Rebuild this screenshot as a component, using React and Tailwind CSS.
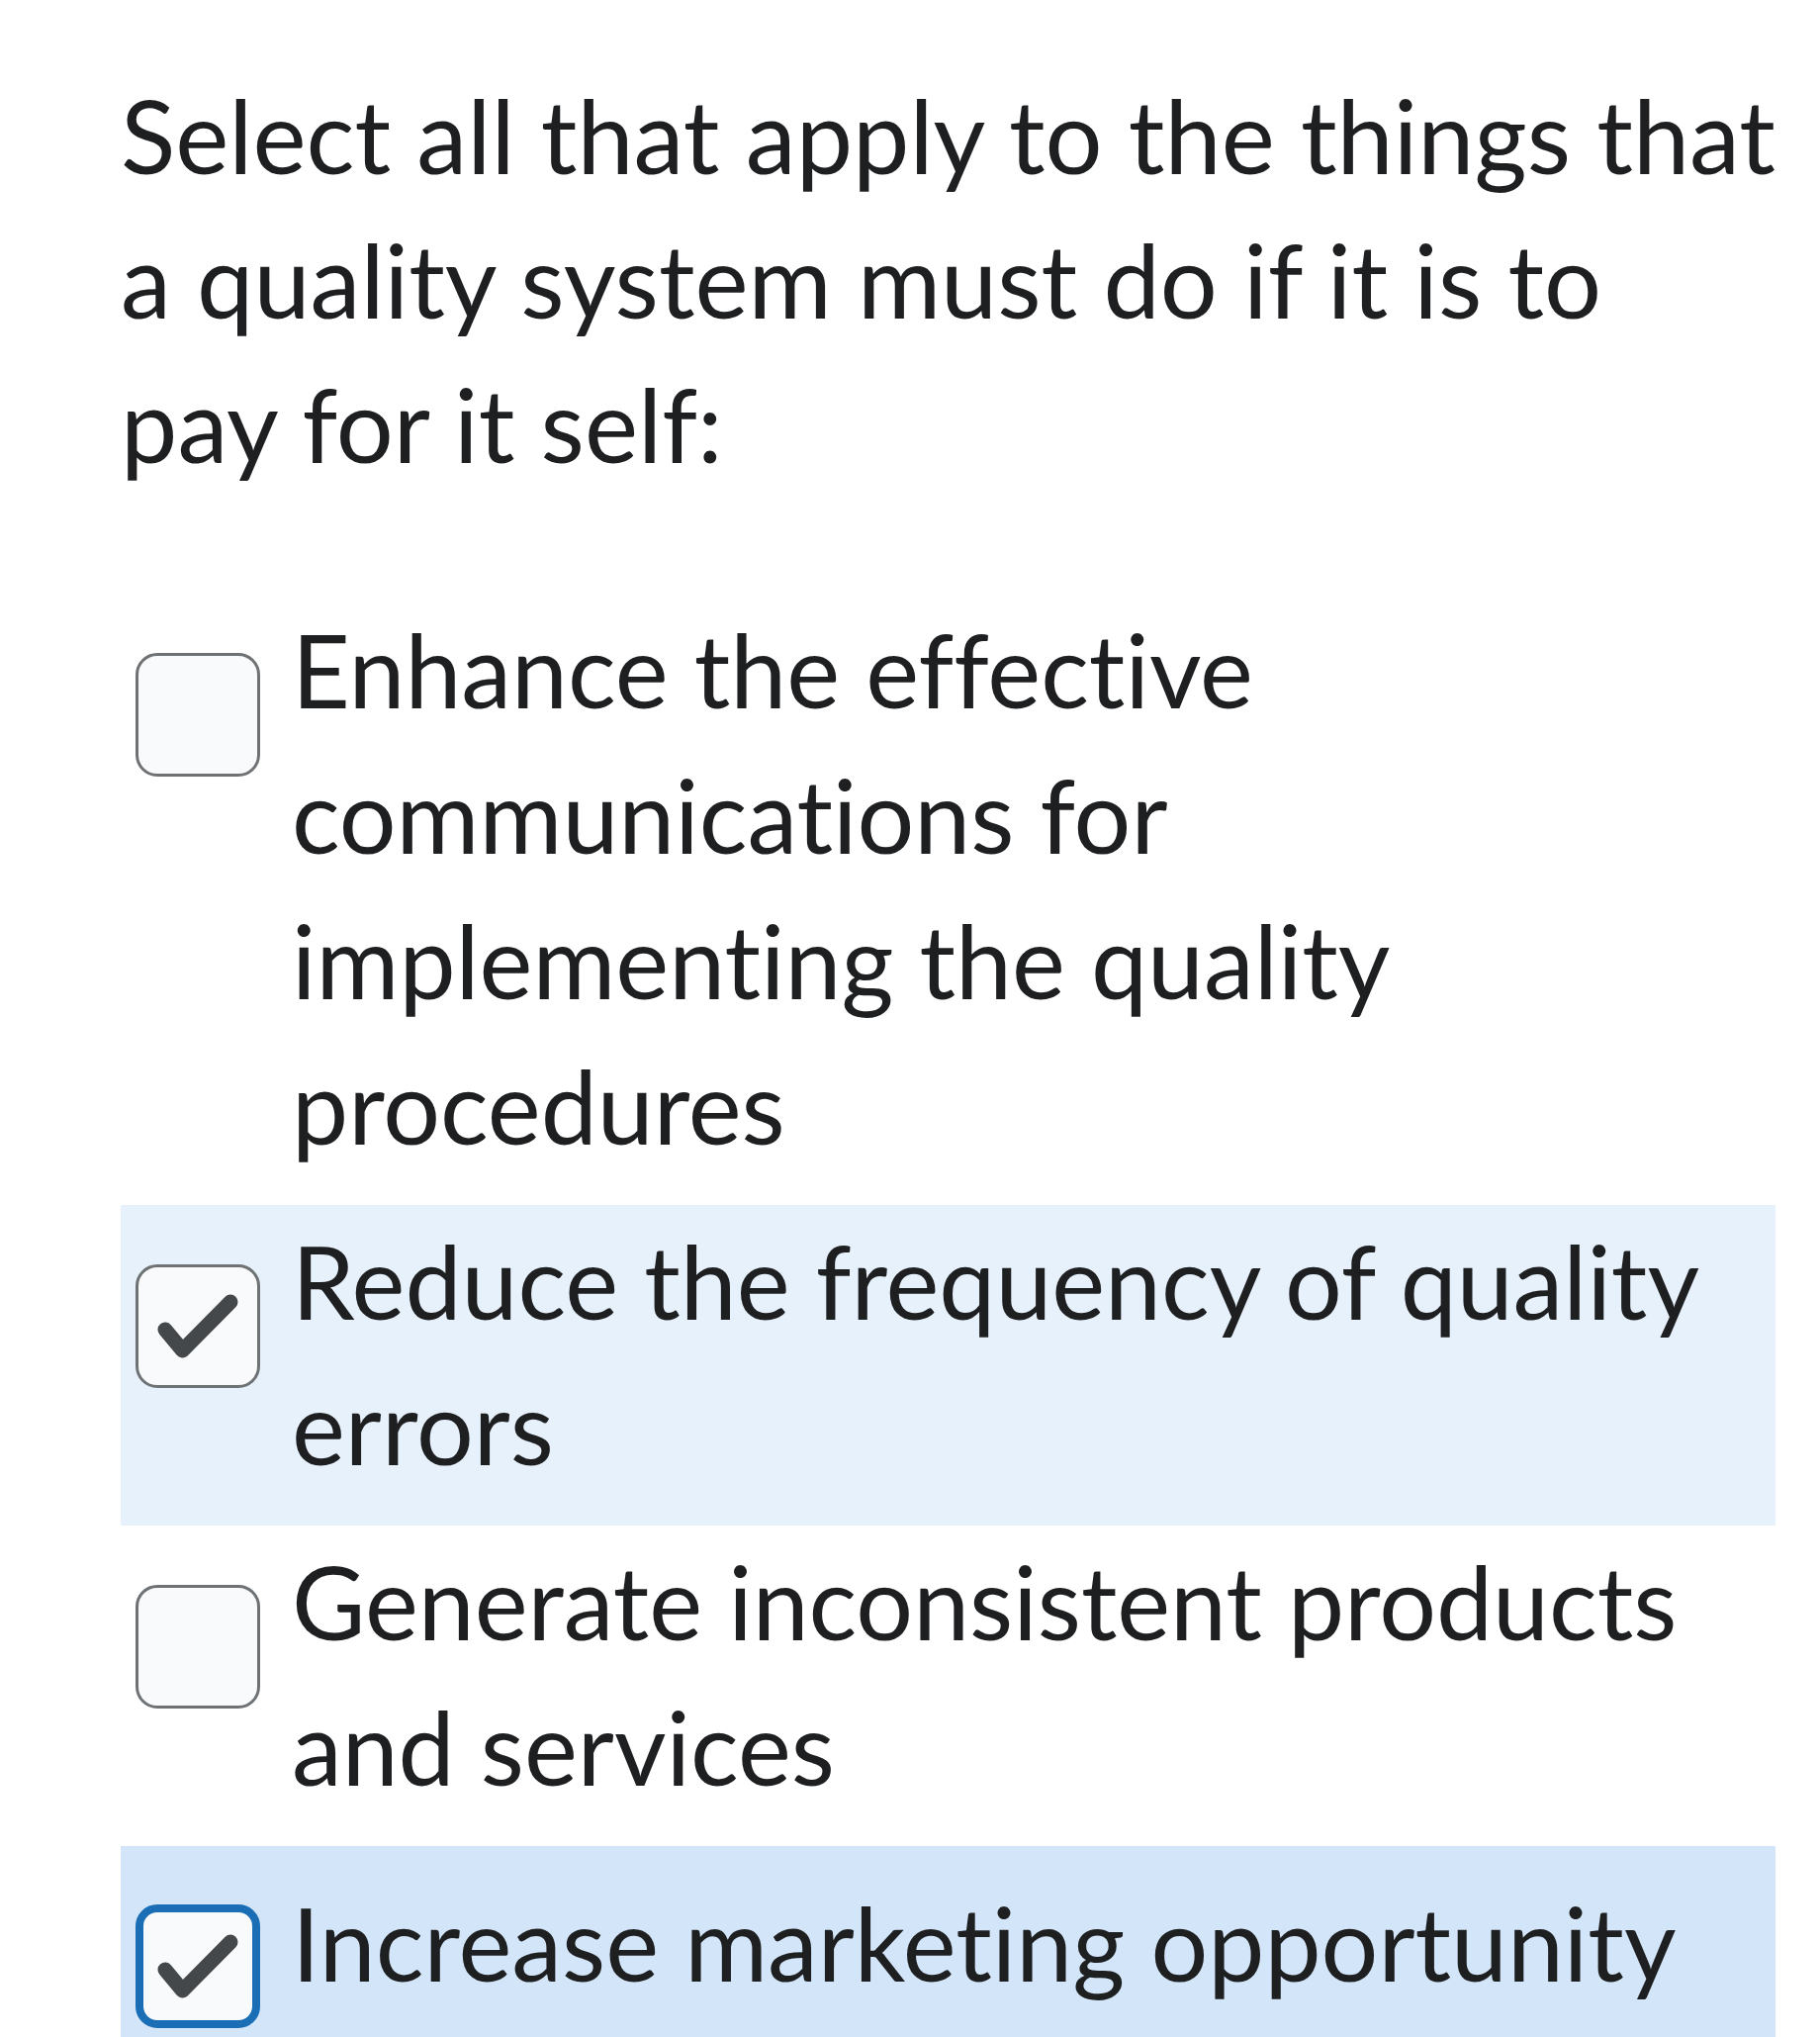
import React from 'react';

const options = [
  { label: 'Enhance the effective communications for implementing the quality procedures', checked: false },
  { label: 'Reduce the frequency of quality errors', checked: true },
  { label: 'Generate inconsistent products and services', checked: false },
  { label: 'Increase marketing opportunity', checked: true, focused: true },
];

const CheckMark = () => (
  <svg width="82" height="66" viewBox="0 0 82 66" fill="none">
    <path
      d="M8 36L25.5 57L74 8"
      stroke="#45484a"
      strokeWidth={15}
      strokeLinecap="round"
      strokeLinejoin="round"
    />
  </svg>
);

const Option = ({ option }) => {
  const rowBg = option.focused ? 'bg-[#d3e5f8]' : option.checked ? 'bg-[#e7f1fc]' : 'bg-white';

  return (
    <label className={`flex items-start pl-[15px] pr-[20px] ${option.focused ? 'pt-[24px]' : 'pt-[3px]'} pb-[27px] ${rowBg}`}>
      <span
        className={`flex items-center justify-center shrink-0 w-[126px] h-[125px] rounded-[22px] bg-[#f9fafc] ${
          option.focused
            ? 'mt-[35px] border-[8px] border-[#1a6eb6]'
            : 'mt-[57px] border-[3px] border-[#6f7275]'
        }`}
      >
        {option.checked && <CheckMark />}
      </span>
      <span className="ml-[32px] text-[102px] leading-[147px] text-[#1e1f21]">{option.label}</span>
    </label>
  );
};

export default function App() {
  return (
    <div className="min-h-screen bg-white pl-[122px] pt-[64px] font-['Lato','Liberation_Sans',sans-serif] [font-variant-ligatures:none]">
      <p className="w-[1676px] text-[102.4px] leading-[146px] text-[#1e1f21]">
        Select all that apply to the things that a quality system must do if it is to pay for it self:
      </p>

      <div className="w-[1673px] mt-[98px]">
        {options.map((option) => (
          <Option key={option.label} option={option} />
        ))}
      </div>
    </div>
  );
}
